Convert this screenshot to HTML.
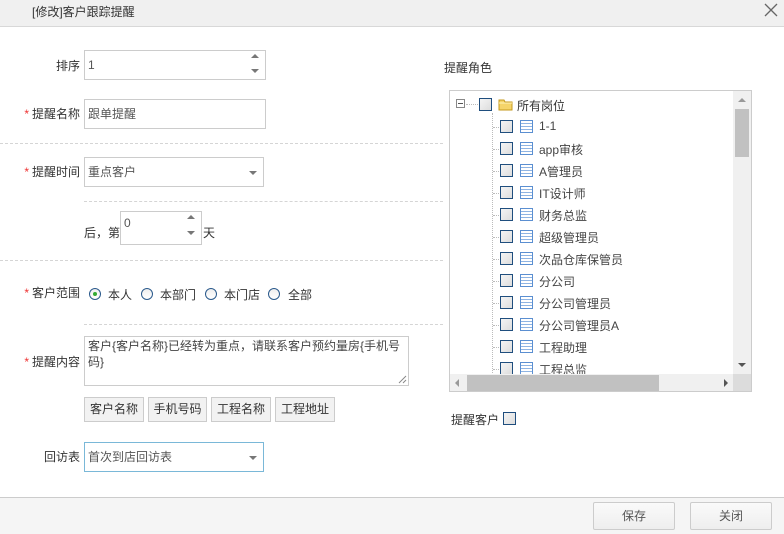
<!DOCTYPE html>
<html><head><meta charset="utf-8"><style>
*{box-sizing:border-box;margin:0;padding:0}
body{width:784px;height:534px;position:relative;background:#fff;font-family:"Liberation Sans","Noto Sans CJK SC",sans-serif;font-size:12px;color:#333;overflow:hidden}
.a{position:absolute;white-space:nowrap}
.lbl{position:absolute;right:704px;line-height:14px}
.star{color:#e33;margin-right:3px}
.inp{position:absolute;border:1px solid #ccc;background:#fff;padding-left:3px;color:#555}
.dash{position:absolute;height:0;border-top:1px dashed #d5d5d5}
.arr{position:absolute;width:0;height:0;border-left:4px solid transparent;border-right:4px solid transparent}
.btn{position:absolute;border:1px solid #ccc;background:#f2f2f2;height:25px;line-height:23px;text-align:center;font-size:12px;color:#333}
.rad{position:absolute;width:12px;height:12px;border:1px solid #2b5a8c;border-radius:50%;background:linear-gradient(#eee,#fff)}
.cb{position:absolute;width:13px;height:13px;border:1.5px solid #1f4e7e;background:linear-gradient(135deg,#f4f4f4,#ddd)}
.ic{position:absolute;width:13px;height:13px;border:1px solid #5b8fd1;background:repeating-linear-gradient(#fff 0 2px,#8fb4e3 2px 3px);}
</style></head><body>
<div class="a" style="left:0;top:0;width:784px;height:27px;background:#f0f0f0;border-bottom:1px solid #d8d8d8"></div>
<div class="a" style="left:32px;top:3px;font-size:12px;color:#333">[修改]客户跟踪提醒</div>
<svg class="a" style="left:764px;top:3px" width="14" height="14"><path d="M1 1L13 13M13 1L1 13" stroke="#666" stroke-width="1.3"/></svg>

<div class="lbl" style="top:59px">排序</div>
<div class="inp" style="left:84px;top:50px;width:182px;height:30px;line-height:28px">1</div>
<div class="arr" style="left:251px;top:54px;border-bottom:4px solid #777"></div>
<div class="arr" style="left:251px;top:69px;border-top:4px solid #777"></div>

<div class="lbl" style="top:107px"><span class="star">*</span>提醒名称</div>
<div class="inp" style="left:84px;top:99px;width:182px;height:30px;line-height:28px">跟单提醒</div>

<div class="dash" style="left:0;top:143px;width:443px"></div>

<div class="lbl" style="top:165px"><span class="star">*</span>提醒时间</div>
<div class="inp" style="left:84px;top:157px;width:180px;height:30px;line-height:28px">重点客户</div>
<div class="arr" style="left:249px;top:171px;border-top:4px solid #777"></div>

<div class="dash" style="left:84px;top:201px;width:359px"></div>
<div class="a" style="left:84px;top:224px">后，第</div>
<div class="inp" style="left:120px;top:211px;width:82px;height:34px;line-height:22px">0</div>
<div class="arr" style="left:187px;top:215px;border-bottom:4px solid #777"></div>
<div class="arr" style="left:187px;top:231px;border-top:4px solid #777"></div>
<div class="a" style="left:203px;top:224px">天</div>

<div class="dash" style="left:0;top:260px;width:443px"></div>

<div class="lbl" style="top:286px"><span class="star">*</span>客户范围</div>
<div class="rad" style="left:89px;top:288px"><div style="position:absolute;left:3px;top:3px;width:4px;height:4px;border-radius:50%;background:#3a3"></div></div>
<div class="a" style="left:108px;top:286px">本人</div>
<div class="rad" style="left:141px;top:288px"></div>
<div class="a" style="left:160px;top:286px">本部门</div>
<div class="rad" style="left:205px;top:288px"></div>
<div class="a" style="left:224px;top:286px">本门店</div>
<div class="rad" style="left:268px;top:288px"></div>
<div class="a" style="left:288px;top:286px">全部</div>

<div class="dash" style="left:84px;top:324px;width:359px"></div>

<div class="lbl" style="top:355px"><span class="star">*</span>提醒内容</div>
<div class="inp" style="left:84px;top:336px;width:325px;height:50px;line-height:16px;padding-top:1px;color:#444;white-space:normal">客户{客户名称}已经转为重点，请联系客户预约量房{手机号码}</div>
<svg class="a" style="left:398px;top:375px" width="9" height="9"><path d="M8 1L1 8M8 5L5 8" stroke="#888"/></svg>

<div class="btn" style="left:84px;top:397px;width:60px">客户名称</div>
<div class="btn" style="left:148px;top:397px;width:59px">手机号码</div>
<div class="btn" style="left:211px;top:397px;width:60px">工程名称</div>
<div class="btn" style="left:275px;top:397px;width:60px">工程地址</div>

<div class="lbl" style="top:450px">回访表</div>
<div class="inp" style="left:84px;top:442px;width:180px;height:30px;line-height:28px;border-color:#7ab8d8">首次到店回访表</div>
<div class="arr" style="left:249px;top:456px;border-top:4px solid #777"></div>

<div class="a" style="left:444px;top:59px">提醒角色</div>
<div class="a" style="left:449px;top:90px;width:303px;height:302px;border:1px solid #ccc;overflow:hidden">
 <div class="a" style="left:283px;top:0;width:18px;height:284px;background:#f0f0f0"></div>
 <div class="a" style="left:285px;top:18px;width:14px;height:48px;background:#c1c1c1"></div>
 <div class="arr" style="left:288px;top:7px;border-bottom:4px solid #999"></div>
 <div class="arr" style="left:288px;top:272px;border-top:4px solid #555"></div>
 <div class="a" style="left:0;top:283px;width:283px;height:18px;background:#f0f0f0"></div>
 <div class="a" style="left:283px;top:283px;width:18px;height:18px;background:#dcdcdc"></div>
 <div class="a" style="left:17px;top:284px;width:192px;height:16px;background:#c1c1c1"></div>
 <div class="a" style="left:5px;top:288px;width:0;height:0;border-top:4px solid transparent;border-bottom:4px solid transparent;border-right:4px solid #999"></div>
 <div class="a" style="left:274px;top:288px;width:0;height:0;border-top:4px solid transparent;border-bottom:4px solid transparent;border-left:4px solid #555"></div>
 <div class="a" style="left:0;top:0;width:283px;height:283px;overflow:hidden">
  <div class="a" style="left:6px;top:8px;width:9px;height:9px;border:1px solid #888;background:#fff"><div style="position:absolute;left:1px;top:3px;width:5px;height:1px;background:#555"></div></div>
  <div class="a" style="left:16px;top:13px;width:12px;border-top:1px dotted #bbb"></div>
  <div class="cb" style="left:29px;top:7px"></div>
  <svg class="a" style="left:48px;top:7px" width="16" height="13"><path d="M1 2h5l1 2h7v8H1z" fill="#f5d46a" stroke="#c59a1e"/><path d="M1 5h13" stroke="#fff3b8"/></svg>
  <div class="a" style="left:67px;top:6px">所有岗位</div>
  <div class="a" style="left:42px;top:22px;height:270px;border-left:1px dotted #bbb"></div>
  <div id="rows"></div>
 </div>
</div>

<div class="a" style="left:451px;top:411px">提醒客户</div>
<div class="cb" style="left:503px;top:412px"></div>

<div class="a" style="left:0;top:497px;width:784px;height:37px;background:#f5f5f5;border-top:1px solid #ccc"></div>
<div class="btn" style="left:593px;top:502px;width:82px;height:28px;line-height:26px;color:#555;border-radius:2px;background:linear-gradient(#fafafa,#eee)">保存</div>
<div class="btn" style="left:690px;top:502px;width:82px;height:28px;line-height:26px;color:#555;border-radius:2px;background:linear-gradient(#fafafa,#eee)">关闭</div>

<script>
var n=["1-1","app审核","A管理员","IT设计师","财务总监","超级管理员","次品仓库保管员","分公司","分公司管理员","分公司管理员A","工程助理","工程总监"],h="";
n.forEach(function(t,i){var y=29+22*i;
h+='<div class="a" style="left:43px;top:'+(y+7)+'px;width:8px;border-top:1px dotted #bbb"></div>'+
'<div class="cb" style="left:50px;top:'+y+'px"></div>'+
'<div class="ic" style="left:70px;top:'+y+'px"></div>'+
'<div class="a" style="left:89px;top:'+(y-1)+'px;color:#444">'+t+'</div>';});
document.getElementById("rows").innerHTML=h;
</script>
</body></html>
